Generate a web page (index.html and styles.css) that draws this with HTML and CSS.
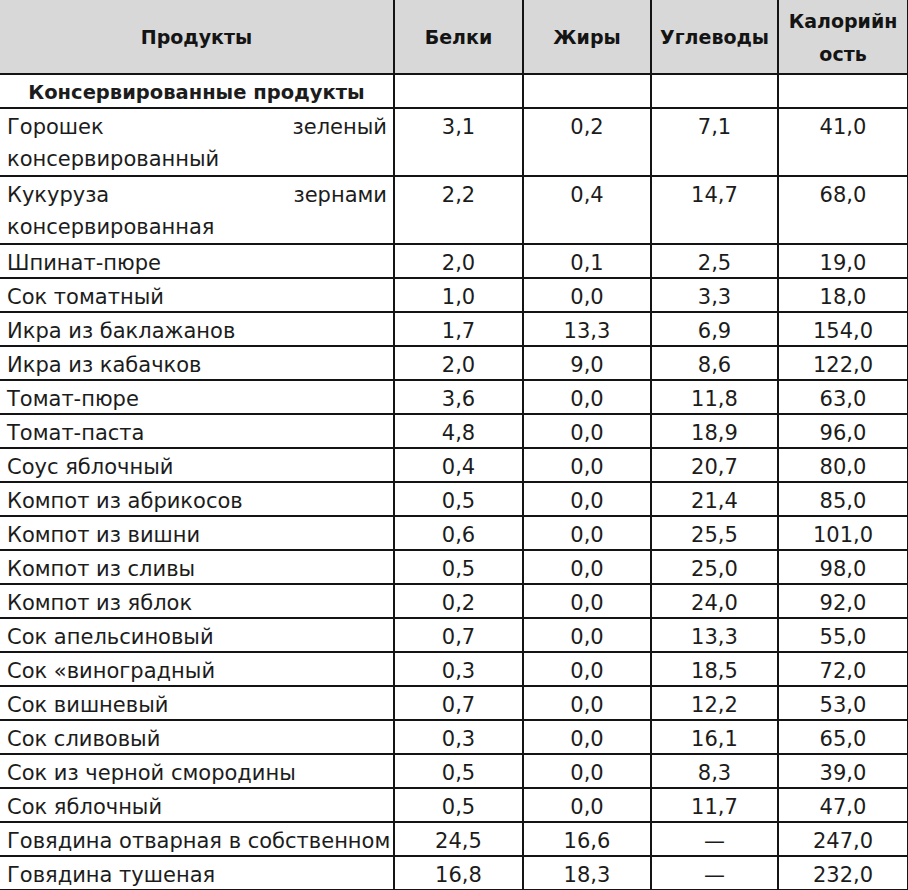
FILE: index.html
```html
<!DOCTYPE html>
<html lang="ru">
<head>
<meta charset="utf-8">
<title>Консервированные продукты</title>
<link rel="stylesheet" href="styles.css">
</head>
<body>
<table class="tbl">
  <colgroup>
    <col class="c-name">
    <col class="c-num">
    <col class="c-num3">
    <col class="c-num4">
    <col class="c-num5">
  </colgroup>
  <thead>
    <tr class="head">
      <th>Продукты</th>
      <th>Белки</th>
      <th>Жиры</th>
      <th>Углеводы</th>
      <th>Калорийн<br>ость</th>
    </tr>
  </thead>
  <tbody>
    <tr class="section"><td>Консервированные продукты</td><td></td><td></td><td></td><td></td></tr>
    <tr class="double"><td class="name just">Горошек зеленый консервированный</td><td>3,1</td><td>0,2</td><td>7,1</td><td>41,0</td></tr>
    <tr class="double"><td class="name just">Кукуруза зернами консервированная</td><td>2,2</td><td>0,4</td><td>14,7</td><td>68,0</td></tr>
    <tr><td class="name">Шпинат-пюре</td><td>2,0</td><td>0,1</td><td>2,5</td><td>19,0</td></tr>
    <tr><td class="name">Сок томатный</td><td>1,0</td><td>0,0</td><td>3,3</td><td>18,0</td></tr>
    <tr><td class="name">Икра из баклажанов</td><td>1,7</td><td>13,3</td><td>6,9</td><td>154,0</td></tr>
    <tr><td class="name">Икра из кабачков</td><td>2,0</td><td>9,0</td><td>8,6</td><td>122,0</td></tr>
    <tr><td class="name">Томат-пюре</td><td>3,6</td><td>0,0</td><td>11,8</td><td>63,0</td></tr>
    <tr><td class="name">Томат-паста</td><td>4,8</td><td>0,0</td><td>18,9</td><td>96,0</td></tr>
    <tr><td class="name">Соус яблочный</td><td>0,4</td><td>0,0</td><td>20,7</td><td>80,0</td></tr>
    <tr><td class="name">Компот из абрикосов</td><td>0,5</td><td>0,0</td><td>21,4</td><td>85,0</td></tr>
    <tr><td class="name">Компот из вишни</td><td>0,6</td><td>0,0</td><td>25,5</td><td>101,0</td></tr>
    <tr><td class="name">Компот из сливы</td><td>0,5</td><td>0,0</td><td>25,0</td><td>98,0</td></tr>
    <tr><td class="name">Компот из яблок</td><td>0,2</td><td>0,0</td><td>24,0</td><td>92,0</td></tr>
    <tr><td class="name">Сок апельсиновый</td><td>0,7</td><td>0,0</td><td>13,3</td><td>55,0</td></tr>
    <tr><td class="name">Сок «виноградный</td><td>0,3</td><td>0,0</td><td>18,5</td><td>72,0</td></tr>
    <tr><td class="name">Сок вишневый</td><td>0,7</td><td>0,0</td><td>12,2</td><td>53,0</td></tr>
    <tr><td class="name">Сок сливовый</td><td>0,3</td><td>0,0</td><td>16,1</td><td>65,0</td></tr>
    <tr><td class="name">Сок из черной смородины</td><td>0,5</td><td>0,0</td><td>8,3</td><td>39,0</td></tr>
    <tr><td class="name">Сок яблочный</td><td>0,5</td><td>0,0</td><td>11,7</td><td>47,0</td></tr>
    <tr><td class="name">Говядина отварная в собственном</td><td>24,5</td><td>16,6</td><td>—</td><td>247,0</td></tr>
    <tr><td class="name">Говядина тушеная</td><td>16,8</td><td>18,3</td><td>—</td><td>232,0</td></tr>
  </tbody>
</table>
</body>
</html>
```
FILE: styles.css
```css
html, body {
  margin: 0;
  padding: 0;
  background: #ffffff;
}

.tbl {
  border-collapse: collapse;
  table-layout: fixed;
  width: 908px;
  font-family: "DejaVu Sans", Verdana, sans-serif;
  font-size: 21px;
  color: #1c1c1c;
}

.c-name { width: 394px; }
.c-num { width: 129px; }
.c-num3 { width: 128px; }
.c-num4 { width: 127px; }
.c-num5 { width: 130px; }

.tbl th,
.tbl td {
  border: 2px solid #141414;
  padding: 4px 6px 0;
  text-align: center;
  vertical-align: top;
  line-height: 28px;
  height: 32px;
  box-sizing: border-box;
  overflow: hidden;
}

.tbl tr > :first-child {
  border-left: none;
}

.tbl thead th {
  border-top: none;
  background: #d8d8d8;
  font-weight: bold;
  font-size: 19px;
  height: 74px;
  padding: 2px 6px 0;
  vertical-align: middle;
  line-height: 33px;
  color: #141414;
}

.section td:first-child {
  font-weight: bold;
  font-size: 19.5px;
  text-align: center;
  white-space: nowrap;
}

.tbl td.name {
  text-align: left;
  white-space: nowrap;
  padding-left: 7px;
}

.tbl td.just {
  text-align: justify;
  white-space: normal;
}

.double td {
  height: 66px;
  padding-top: 2px;
  line-height: 32px;
}
```
